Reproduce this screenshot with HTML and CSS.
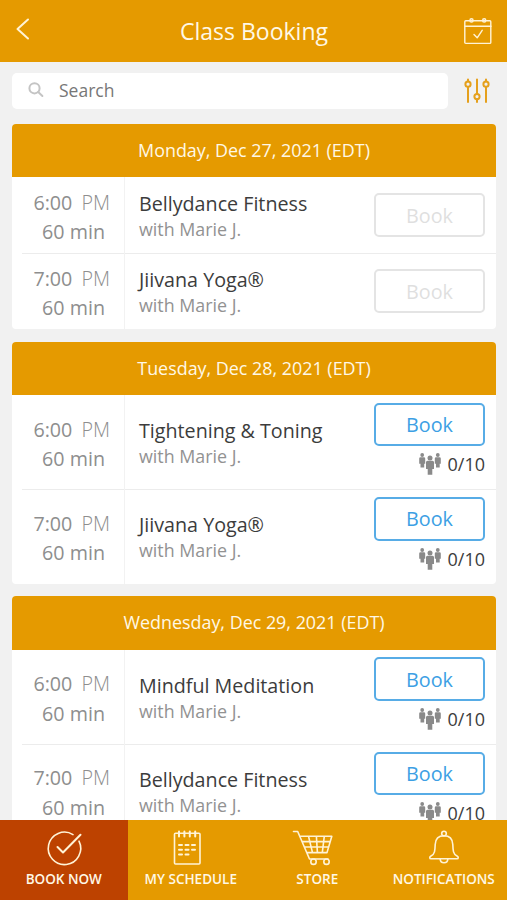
FILE: index.html
```html
<!DOCTYPE html>
<html lang="en">

<head>
  <meta charset="UTF-8">
  <title>Class Booking</title>
  <link rel="stylesheet" href="styles.css">
</head>

<body>

  <!-- shared icon -->
  <svg class="defs" width="0" height="0">
    <symbol id="people" viewBox="0 0 22 22">
      <circle cx="3.2" cy="2" r="1.9" />
      <path d="M.2 5.600q0-1.300 1.300-1.300h3.400q1.300 0 1.300 1.300v5.200H5.200v3.700H1.500v-3.700H.2z" />
      <circle cx="18.8" cy="2" r="1.9" />
      <path d="M15.800 5.600q0-1.300 1.300-1.300h3.400q1.300 0 1.300 1.300v5.200h-1.100v3.700h-3.700v-3.700h-1.200z" />
      <circle cx="11" cy="5" r="2.500" />
      <path d="M7 9.300q0-1.500 1.500-1.500h5q1.500 0 1.500 1.500v6.700H13.300v5.700H8.700v-5.700H7z" />
    </symbol>
  </svg>

  <header class="header">
    <svg class="back" width="14" height="22" viewBox="0 0 14 22">
      <path d="M12 1.500 1.500 11l10.500 9.500" />
    </svg>
    <h1>Class Booking</h1>
    <svg class="calendar" width="28" height="28" viewBox="0 0 28 28">
      <rect x=".8" y="3.8" width="26" height="22.6" rx="1" />
      <path d="M1 9.2h26M10 17.5l3.2 3.3 5-7.5" />
      <circle cx="7.5" cy="3.4" r="1.6" />
      <circle cx="20.2" cy="3.4" r="1.6" />
    </svg>
  </header>

  <div class="search-row">
    <div class="search">
      <svg width="16" height="16" viewBox="0 0 16 16">
        <circle cx="6.5" cy="6.3" r="5.1" />
        <path d="m10.200 10 4.200 4" />
      </svg>
      <span>Search</span>
    </div>
    <svg class="filter" width="26" height="26" viewBox="0 0 26 26">
      <path d="M4 1.500v2M4 9v15M13 1.500v14.300M13 21.600v2.400M22 1.500v2M22 9v15" />
      <circle cx="4" cy="6.2" r="2.6" />
      <circle cx="13" cy="18.6" r="2.6" />
      <circle cx="22" cy="6.2" r="2.6" />
    </svg>
  </div>

  <main class="list">

    <section class="day">
      <h2>Monday, Dec 27, 2021 (EDT)</h2>
      <div class="class-row closed">
        <div class="time"><p>6:00 <span>PM</span></p><p class="length">60 min</p></div>
        <div class="info"><h3>Bellydance Fitness</h3><p>with Marie J.</p></div>
        <div class="action"><button class="book">Book</button></div>
      </div>
      <div class="class-row closed">
        <div class="time"><p>7:00 <span>PM</span></p><p class="length">60 min</p></div>
        <div class="info"><h3>Jiivana Yoga®</h3><p>with Marie J.</p></div>
        <div class="action"><button class="book">Book</button></div>
      </div>
    </section>

    <section class="day">
      <h2>Tuesday, Dec 28, 2021 (EDT)</h2>
      <div class="class-row">
        <div class="time"><p>6:00 <span>PM</span></p><p class="length">60 min</p></div>
        <div class="info"><h3>Tightening &amp; Toning</h3><p>with Marie J.</p></div>
        <div class="action">
          <button class="book">Book</button>
          <div class="spots"><svg><use href="#people" /></svg>0/10</div>
        </div>
      </div>
      <div class="class-row">
        <div class="time"><p>7:00 <span>PM</span></p><p class="length">60 min</p></div>
        <div class="info"><h3>Jiivana Yoga®</h3><p>with Marie J.</p></div>
        <div class="action">
          <button class="book">Book</button>
          <div class="spots"><svg><use href="#people" /></svg>0/10</div>
        </div>
      </div>
    </section>

    <section class="day">
      <h2>Wednesday, Dec 29, 2021 (EDT)</h2>
      <div class="class-row">
        <div class="time"><p>6:00 <span>PM</span></p><p class="length">60 min</p></div>
        <div class="info"><h3>Mindful Meditation</h3><p>with Marie J.</p></div>
        <div class="action">
          <button class="book">Book</button>
          <div class="spots"><svg><use href="#people" /></svg>0/10</div>
        </div>
      </div>
      <div class="class-row">
        <div class="time"><p>7:00 <span>PM</span></p><p class="length">60 min</p></div>
        <div class="info"><h3>Bellydance Fitness</h3><p>with Marie J.</p></div>
        <div class="action">
          <button class="book">Book</button>
          <div class="spots"><svg><use href="#people" /></svg>0/10</div>
        </div>
      </div>
    </section>

  </main>

  <nav class="tabs">
    <a class="tab active">
      <svg width="40" height="40" viewBox="0 0 40 40">
        <path d="M29 6.600A16.200 16.200 0 1 0 35 13.200" />
        <path class="thick" d="m13.500 19 5.500 5.500L36.500 6.800" />
      </svg>
      <span>BOOK NOW</span>
    </a>
    <a class="tab">
      <svg class="notes" width="40" height="40" viewBox="0 0 40 40">
        <rect x="7.5" y="5.2" width="25.5" height="30.8" rx="1" />
        <path class="thick" d="M12 3.500v5M17.400 3.500v5M22.800 3.500v5M28.200 3.500v5" />
        <path class="thick" d="M12 17h3M18.500 17h3M25 17h3M12 21.800h3M18.500 21.800h3M25 21.800h3M12 26.600h3M18.500 26.600h3" />
      </svg>
      <span>MY SCHEDULE</span>
    </a>
    <a class="tab">
      <svg class="cart" width="42" height="40" viewBox="0 0 42 40">
        <path d="M1.500 3.500h4.200L17.500 31H36M7.800 8.200h32L35 24.600H15M10.300 13.600h28M12.400 19h24.400M16.500 8.200l4 16.400M24.400 8.200l1 16.400M32.300 8.200l-2 16.400" />
        <circle cx="21.5" cy="33.7" r="2.7" />
        <circle cx="34.5" cy="33.7" r="2.7" />
      </svg>
      <span>STORE</span>
    </a>
    <a class="tab">
      <svg width="40" height="40" viewBox="0 0 40 40">
        <path d="M7 30.800c-1.600 0-1.700-2 0-2.800 4-1.800 4-6 4.200-11.500C11.500 10.500 15 7.800 20 7.800s8.500 2.700 8.800 8.700C29 22 29 26.200 33 28c1.700.8 1.600 2.800 0 2.800z" />
        <circle cx="20" cy="5.600" r="2.300" />
        <path d="M16.200 31c.2 5 7.400 5 7.600 0" />
      </svg>
      <span>NOTIFICATIONS</span>
    </a>
  </nav>

</body>

</html>
```
FILE: styles.css
```css
* {
  box-sizing: border-box;
}

body {
  margin: 0;
  height: 100vh;
  display: flex;
  flex-direction: column;
  overflow: hidden;
  background-color: #f1f1f1;
  font-family: "Open Sans", sans-serif;
  color: #3c3c3c;
}

h1, h2, h3, p {
  margin: 0;
  font-weight: 400;
}

svg {
  display: block;
  flex: none;
  fill: none;
  stroke-linecap: round;
  stroke-linejoin: round;
}

.defs {
  position: absolute;
}

/* header */
.header {
  flex: none;
  height: 61.5px;
  padding: 0 15px 0 16px;
  display: grid;
  grid-template-columns: 60px 1fr 60px;
  align-items: center;
  background-color: #e59a00;
}

.header svg {
  stroke: #fff3d6;
  stroke-width: 1.4;
}

.header .back {
  margin-bottom: 4px;
  stroke-width: 2;
}

.header .calendar {
  justify-self: end;
}

.header h1 {
  font-size: 23px;
  line-height: 32px;
  padding-top: 1px;
  text-align: center;
  color: #fff8e6;
}

/* search */
.search-row {
  flex: none;
  display: flex;
  align-items: center;
  padding: 11px 17px 15px 12px;
  gap: 16px;
}

.search {
  flex: 1;
  height: 36px;
  padding: 0 0 1px 16px;
  display: flex;
  align-items: center;
  gap: 15px;
  background-color: #fff;
  border-radius: 5px;
  font-size: 17.5px;
  color: #777;
}

.search svg {
  stroke: #c4c4c4;
  stroke-width: 2;
}

.filter {
  stroke: #e5a01c;
  stroke-width: 2;
}

/* class list */
.list {
  flex: 1;
  min-height: 0;
  overflow: hidden;
  padding: 0 11px 0 12px;
}

.day {
  margin-bottom: 12.5px;
  background-color: #fff;
  border-radius: 4px;
  overflow: hidden;
}

.day h2 {
  height: 53.5px;
  line-height: 53.5px;
  font-size: 17.9px;
  text-align: center;
  color: #fff8e6;
  background-color: #e59a00;
}

.class-row {
  height: 94.25px;
  display: grid;
  grid-template-columns: 113px 1fr 122px;
  align-items: center;
}

.class-row.closed {
  height: 76px;
}

/* divider starts a little in from the card edge */
.class-row + .class-row {
  background: linear-gradient(#ececec, #ececec) 10px 0 / 100% 1px no-repeat;
}

.time {
  height: 100%;
  padding: 4px 14px 0 0;
  display: flex;
  flex-direction: column;
  justify-content: center;
  border-right: 1px solid #f2f2f2;
  font-size: 19.7px;
  line-height: 29.5px;
  text-align: right;
  color: #8e8e8e;
}

.time span {
  margin-left: 4px;
  font-weight: 300;
}

.time .length {
  padding-right: 5px;
}

.info {
  padding: 2px 0 0 14px;
  white-space: nowrap;
}

.info h3 {
  font-size: 19.7px;
  line-height: 26px;
}

.info p {
  font-size: 17.85px;
  line-height: 24px;
  color: #929292;
}

.action {
  padding: 0 11px 6px 0;
}

.closed .action {
  padding-bottom: 0;
}

.book {
  display: block;
  width: 111px;
  height: 43.5px;
  padding: 0;
  border: 2px solid #57ace6;
  border-radius: 5px;
  background-color: #fff;
  font-family: inherit;
  font-size: 19.8px;
  color: #3d9fe4;
}

.closed .book {
  border-color: #e4e4e4;
  color: #dfdfdf;
}

.spots {
  margin-top: 7px;
  height: 22px;
  display: flex;
  align-items: center;
  justify-content: flex-end;
  gap: 7px;
  font-size: 18px;
}

.spots svg {
  width: 22px;
  height: 22px;
  fill: #8a8a8a;
}

/* bottom tabs */
.tabs {
  flex: none;
  height: 80.5px;
  display: grid;
  grid-template-columns: 127.5px 1fr 1fr 1fr;
  background-color: #e59a00;
}

.tab {
  padding-top: 8px;
  display: flex;
  flex-direction: column;
  align-items: center;
  font-size: 13.5px;
  line-height: 20px;
  font-weight: 600;
  color: #fff8e6;
}

.tab.active {
  background-color: #bd4200;
}

.tab svg {
  stroke: #fff3d6;
  stroke-width: 1.6;
}

.tab .notes {
  margin-right: 7px;
}

.tab .cart {
  margin-right: 9px;
}

.tab .thick {
  stroke-width: 2;
}

.tab span {
  margin-top: 1px;
}
```
